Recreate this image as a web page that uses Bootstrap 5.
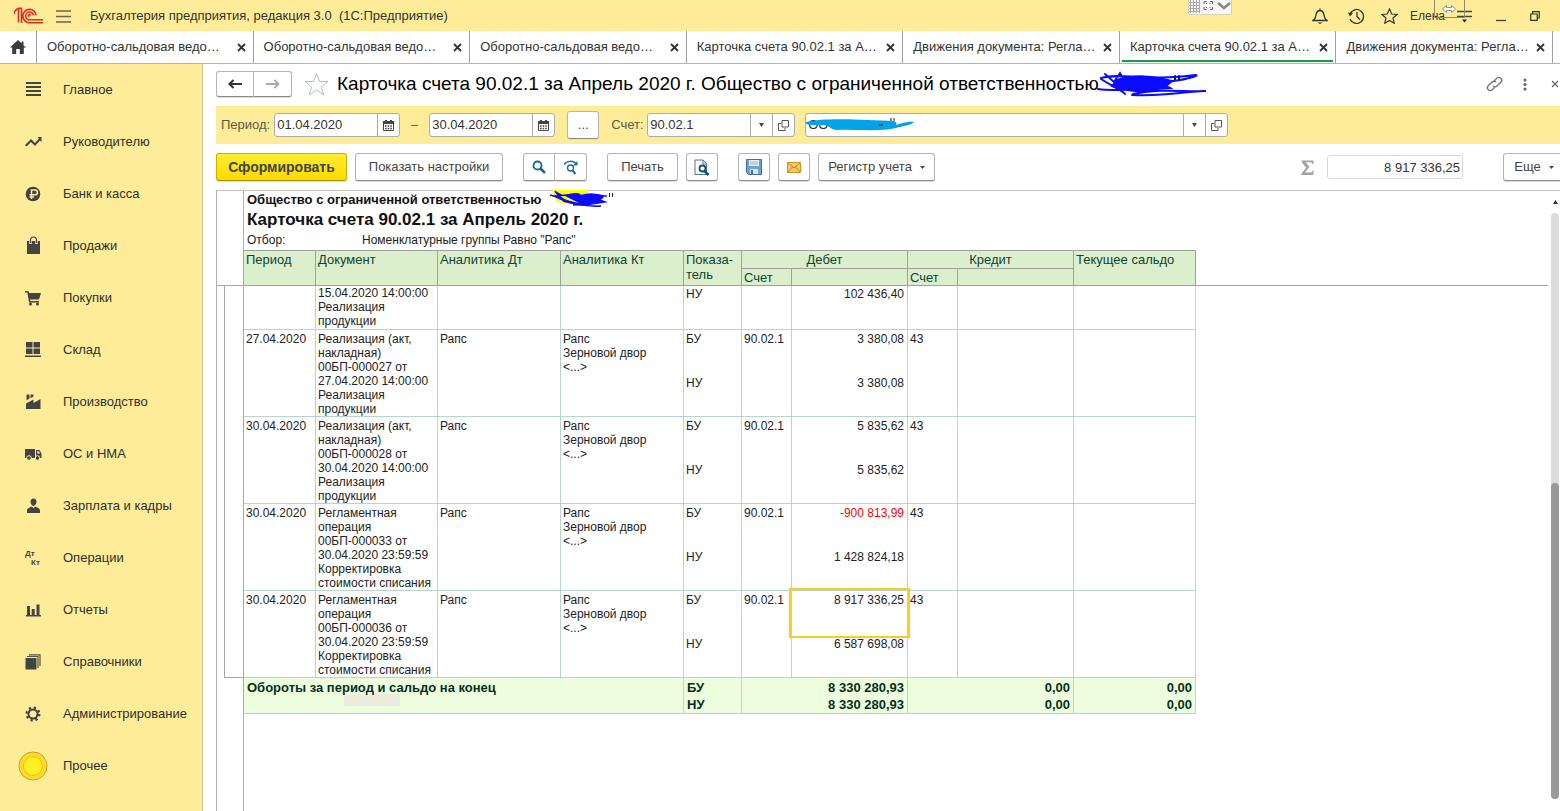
<!DOCTYPE html>
<html lang="ru">
<head>
<meta charset="utf-8">
<meta name="viewport" content="width=device-width, initial-scale=1">
<title>Бухгалтерия предприятия, редакция 3.0</title>
<link rel="stylesheet" href="https://cdn.jsdelivr.net/npm/bootstrap@5.3.0/dist/css/bootstrap.min.css">
<style>
:root{--yel:#feec99;--line:#a0a0a0;--cell:#b5d6c8}
body{font-family:"Liberation Sans",Arial,sans-serif;font-size:13px;line-height:18px;color:#333;background:#fff;overflow-x:hidden}
svg{display:block;flex:none}
button{font-family:inherit;color:inherit}
.bg-yel{background:var(--yel)}
.gap-l8{margin-left:8px}
.gap-l12{margin-left:12px}
.gap-l20{margin-left:20px}
.gap-l24{margin-left:24px}
.gap-l40{margin-left:40px}
.topbar{height:31px;padding:0 20px 0 13px}
.app-name{margin-left:19px}
.plain{background:none;border:0;padding:0;display:flex;align-items:center;justify-content:center}
.ghost{position:absolute;left:24px;top:-8px}
.widget{position:absolute;top:0;right:328px}
.user-name{font-size:12px}
.tabs{height:33px;border-bottom:1px solid #b4b4b4;padding-right:7px}
.home{width:37px;border-right:1px solid var(--line)}
.doc-tab{flex:1 1 0;min-width:0;border-right:1px solid var(--line);padding:0 7px 0 10px;position:relative}
.doc-tab a{color:#333;text-decoration:none;white-space:nowrap}
.doc-tab.current::after{content:"";position:absolute;left:2px;right:2px;bottom:1px;height:2px;background:#169c45}
.side{width:203px;border-right:1px solid #cfc98e;flex:none}
.side a{display:flex;align-items:center;height:52px;padding-left:18px;gap:15px;color:#2f2f2f;text-decoration:none;white-space:nowrap}
.side svg{width:30px;height:30px;fill:#444}
.pane{padding-left:13px;min-width:0}
.b1{background:#fff;border:1px solid #b4b4b4;border-bottom-color:#8c8c8c;border-radius:3px;height:28px;padding:0;color:#444;display:flex;align-items:center;justify-content:center;gap:8px;box-shadow:0 1px 0 #ddd;white-space:nowrap;flex:none}
.group .b1:first-child{border-radius:3px 0 0 3px}
.group .b1:last-child{border-radius:0 3px 3px 0;border-left:0}
.go{background:linear-gradient(#ffee30,#ffd900);border-color:#c9b100;border-bottom-color:#a89400;font-weight:bold;font-size:14px;width:131px}
.nav-b{width:38px;height:26px}
.w32{width:32px}
.w71{width:71px}
.w117{width:117px}
.w148{width:148px}
.titlebar{height:42px;padding-bottom:2px}
.titlebar h1{font-size:19px;line-height:24px;font-weight:400;color:#000;margin:0 0 0 8px;white-space:nowrap}
.filter{height:38px;padding-left:5px;color:#5a5a4a}
.dash{width:29px;text-align:center}
.acct-label{width:36px}
.field{display:flex;height:24px;background:#fff;border:1px solid #a9abb0;border-radius:3px;min-width:0;position:relative}
.field input{border:0;padding:0 2px;min-width:0;flex:1 1 0;background:none;color:#333;outline:0}
.field button{background:none;border:0;border-left:1px solid #a9abb0;width:22px;padding:0;display:flex;align-items:center;justify-content:center;flex:none}
.date{width:126px}
.acct{width:148px}
.org{flex:0 1 423px;margin-left:10px}
.scrib{position:absolute;pointer-events:none}
.scrib-title{left:-2px;top:-2px}
.scrib-org{left:-4px;top:3px}
.scrib-rep{left:8px;top:-2px}
.tools{height:46px}
.sum{width:136px;height:24px;border:1px solid #d8d8d8;border-radius:3px;text-align:right;padding:0 2px;color:#333}
.more{width:61px;margin-right:-4px;border-right:0}
.sheet{border-top:1px solid #c4c4c4;min-height:0}
.sheet-main{border-left:1px solid #b0b0b0;margin-right:3px}
.inset{margin-left:26px;border-left:1px solid #b0b0b0;padding-left:3px;color:#222}
.org-line{font-weight:bold;font-size:13px;line-height:18px;color:#111}
.rep-title{font-weight:bold;font-size:17px;line-height:21px;color:#111;margin:0}
.cond{font-size:12px;line-height:21px;height:20px}
.cond span{width:115px;display:inline-block}
.ledger{table-layout:fixed;width:100%;border-collapse:separate;border-spacing:0;font-size:12px;line-height:14px;color:#222}
.c8{width:8px}.c19{width:19px}.c50{width:50px}.c58{width:58px}.c72{width:72px}.c116{width:116px}.c122{width:122px}.c123{width:123px}
.ledger th,.ledger td{padding:2px 3px 0 2px;vertical-align:top;border-right:1px solid var(--cell);border-bottom:1px solid var(--cell);white-space:nowrap}
.ledger thead th{background:#dcefcd;color:#0d4434;font-weight:400;font-size:13px;line-height:15px;padding:1px 2px 0;border-color:var(--line)}
.ledger thead tr:first-child{height:19px}
.ledger thead tr:first-child th{border-top:1px solid var(--line)}
.ledger .gut,.ledger thead tr:first-child .gut{background:none;border-top:0;border-color:#a6a6a6;padding:0}
.ledger td.g1{border-bottom:0}
.ledger .off,.ledger thead tr:first-child .off{background:none;border-right:0;border-top:0}
.ledger tbody .off,.ledger tfoot .off{border:0}
.ledger tbody tr{height:87px}
.ledger tbody tr.cut{height:44px}
.ledger tr.cut td{padding-top:0}
.ledger tr.cut .pair{padding-top:1px}
.ledger .pair span{display:block;height:44px}
.ledger tr.cut .pair span{height:auto}
.ledger .num{text-align:right;position:relative}
.ledger tfoot td{background:#ecfedd;font-weight:bold;font-size:13px;line-height:17px;color:#062f20;padding:1px 3px 0;position:relative}
.ledger tfoot .gut,.ledger tfoot .off{background:none}
.ledger tfoot .gut{border-bottom:0}
.smudge{position:absolute;left:100px;top:16px;width:56px;height:12px;background:#ebecdc}
.pick{position:absolute;left:-3px;top:-3px;right:-3px;height:50px;border:2px solid #fbcb1f}
.neg{color:#f00}
.bar{width:9px;padding:9px 0 0;margin-right:1px}
.track{background:#dcdcdc;border-radius:4px;width:8px;margin:9px 0 12px;display:flex;flex-direction:column;justify-content:flex-end}
.thumb{background:#999;border-radius:4px;height:54%}
</style>
</head>
<body class="d-flex flex-column min-vh-100">
<header class="topbar bg-yel d-flex align-items-center position-relative">
  <svg width="31" height="18" viewBox="0 0 31 18" fill="none" stroke="#e02a20" stroke-width="1.6"><path d="M1 5 4 2h1.500v13.500M1 6h1.500M8.500 16V1.200H5M30 15.800H16.500a6.700 6.700 0 1 1 6.700-7.500M30 12.800H16.800a3.900 3.900 0 1 1 3.700-4.500M17.500 8.500a1 1 0 1 0-1 1"/></svg>
  <button class="plain gap-l12" aria-label="Меню"><svg width="15" height="14" viewBox="0 0 15 14" stroke="#6b6647" stroke-width="1.500"><path d="M0 2h15M0 7.500h15M0 13h15"/></svg></button>
  <span class="app-name text-nowrap">Бухгалтерия предприятия, редакция 3.0&nbsp; (1С:Предприятие)</span>
  <div class="widget"><svg width="44" height="15" viewBox="0 0 44 15"><path fill="#f7f7f5" stroke="#d6d2bb" d="M.5-.5h43v15H.5z"/><path stroke="#aaa" d="M1 2.500h11M1 5.500h11M1 8.500h11M1 11.500h11M2.500 0v13M5.500 0v13M8.500 0v13M11.500 0v13"/><path fill="none" stroke="#666" d="M16 4V1.500h2.500M22 1.500h2.500V4M24.500 7v2.500H22M18.500 9.500H16V7M18 3l1 1M22.500 3l-1 1M18 8l1-1M22.500 8l-1-1"/><path d="m30 3 6 5 6-5" fill="none" stroke="#888" stroke-width="2.500"/></svg></div>
  <div class="ms-auto d-flex align-items-center">
    <button class="plain" aria-label="Уведомления"><svg width="16" height="16" viewBox="0 0 16 16" fill="none" stroke="#333" stroke-width="1.300"><path d="M1 12.500c3-2 2.500-4 3.300-7C5 3.500 6.500 2.500 8 2.500s3 1 3.700 3c.8 3 .3 5 3.300 7zM8 .500v2"/><path d="M5.500 14.500h5l-2.500 1.500z" fill="#333" stroke="none"/></svg></button>
    <button class="plain gap-l20" aria-label="История"><svg width="17" height="16" viewBox="0 0 17 16" fill="none" stroke="#333" stroke-width="1.300"><path d="M2 6a7 7 0 1 1 0 5M9 4v4.500l3 3"/><path d="M0 4.500 5 5 2 8.500z" fill="#333" stroke="none"/></svg></button>
    <button class="plain ms-3" aria-label="Избранное"><svg width="17" height="16" viewBox="0 0 17 16" fill="none" stroke="#333" stroke-width="1.200"><path d="m8.500 1 2.200 5 5.300.5-4 3.500 1.200 5.200-4.700-2.800-4.700 2.800L5 10 1 6.500 6.300 6z"/></svg></button>
    <div class="gap-l12 position-relative d-flex align-items-center">
      <span class="user-name">Елена</span>
      <svg class="ghost" width="31" height="20" viewBox="0 0 31 20" fill="none" stroke="#8f8a66"><path d="M.5 0v18.500h30V0"/><path fill="#fff" stroke="#8a93a5" d="m8.500 10 4-3.500v2h5v-2l4 3.500-4 3.500v-2h-5v2z"/></svg>
      <button class="plain gap-l12" aria-label="Настройки"><svg width="15" height="14" viewBox="0 0 15 14" stroke="#444" stroke-width="1.300"><path d="M0 2.500h15M0 7.500h15"/><path d="M5 10.500h5l-2.500 3z" fill="#222" stroke="none"/></svg></button>
    </div>
    <button class="plain gap-l24" aria-label="Свернуть"><svg width="10" height="12"><path d="M0 10.500h10" stroke="#444" stroke-width="1.300"/></svg></button>
    <button class="plain gap-l24" aria-label="Развернуть"><svg width="10" height="10" viewBox="0 0 10 10" fill="none" stroke="#333" stroke-width="1.200"><path d="M.7 3h6.500v6.300H.7zM2.700 3V.7h6.500V7H7.200"/></svg></button>
  </div>
</header>

<nav class="tabs d-flex flex-shrink-0">
  <a href="#" class="home d-flex align-items-center justify-content-center" aria-label="Начальная страница"><svg width="16" height="14" viewBox="0 0 16 14" fill="#3c3c3c"><path d="M8 0 0 7.500h2.200V14h4V9h3.600v5h4V7.500H16l-2.500-2.300V1.500h-2v1.800z"/></svg></a>
  <div class="doc-tab d-flex align-items-center justify-content-between"><a href="#">Оборотно-сальдовая ведо…</a><button class="plain close-x" aria-label="Закрыть"></button></div>
  <div class="doc-tab d-flex align-items-center justify-content-between"><a href="#">Оборотно-сальдовая ведо…</a><button class="plain close-x" aria-label="Закрыть"></button></div>
  <div class="doc-tab d-flex align-items-center justify-content-between"><a href="#">Оборотно-сальдовая ведо…</a><button class="plain close-x" aria-label="Закрыть"></button></div>
  <div class="doc-tab d-flex align-items-center justify-content-between"><a href="#">Карточка счета 90.02.1 за А…</a><button class="plain close-x" aria-label="Закрыть"></button></div>
  <div class="doc-tab d-flex align-items-center justify-content-between"><a href="#">Движения документа: Регла…</a><button class="plain close-x" aria-label="Закрыть"></button></div>
  <div class="doc-tab current d-flex align-items-center justify-content-between"><a href="#">Карточка счета 90.02.1 за А…</a><button class="plain close-x" aria-label="Закрыть"></button></div>
  <div class="doc-tab d-flex align-items-center justify-content-between"><a href="#">Движения документа: Регла…</a><button class="plain close-x" aria-label="Закрыть"></button></div>
</nav>

<div class="d-flex flex-grow-1">
  <nav class="side bg-yel">
    <a href="#"><svg viewBox="0 0 30 30"><path d="M8 7h15v2H8zm0 4h15v2H8zm0 4h15v2H8zm0 4h15v2H8z"/></svg>Главное</a>
    <a href="#"><svg viewBox="0 0 30 30"><path d="m7 18 6-6 4 4 4-4.500L19.500 10H23.500v5L22 13.500 17 19l-4-4-4.500 4.500z"/></svg>Руководителю</a>
    <a href="#"><svg viewBox="0 0 30 30"><circle cx="15" cy="15" r="7.300"/><path d="M13.500 20v-9H17a2.300 2.300 0 0 1 0 4.800h-5.500M11.500 18H16" fill="none" stroke="#feec99" stroke-width="1.500"/></svg>Банк и касса</a>
    <a href="#"><svg viewBox="0 0 30 30"><path d="M9 10h13v13H9z"/><path d="M12.500 13v-3a3 3.500 0 0 1 6 0v3" fill="none" stroke="#feec99" stroke-width="2.600"/><path d="M12.500 12v-2.500a3 3.500 0 0 1 6 0V12" fill="none" stroke="#444" stroke-width="1.200"/></svg>Продажи</a>
    <a href="#"><svg viewBox="0 0 30 30"><path d="M7 8h3.500l.6 2H23l-2 6.500H12l.4 1.500H21v1.500H11L9.300 9.500H7z"/><circle cx="12.500" cy="21" r="1.500"/><circle cx="19.500" cy="21" r="1.500"/></svg>Покупки</a>
    <a href="#"><svg viewBox="0 0 30 30"><path d="M8 7h6.500v5.500H8zm7.500 0H22v5.500h-6.500zM8 13.500h6.500V19H8zm7.500 0H22V19h-6.500zM7 20.500h16V22H7z"/></svg>Склад</a>
    <a href="#"><svg viewBox="0 0 30 30"><path d="M8 22v-5.500l7.500-4V16l7-4v10zM8.500 7.500h3v4l-3 1.800zM12.500 7.500h3v2l-3 1.700z"/></svg>Производство</a>
    <a href="#"><svg viewBox="0 0 30 30"><path d="M7 10h10v9H7zM18 11h3.500l2 3.500V19H18zm1.200 1.200v2.300h3l-1.300-2.300z"/><circle cx="11" cy="19" r="2.300" stroke="#feec99"/><circle cx="19.500" cy="19" r="2.300" stroke="#feec99"/></svg>ОС и НМА</a>
    <a href="#"><svg viewBox="0 0 30 30"><path d="M15.500 7.500c2 0 3 1.500 3 3.300S17 15 15.500 15s-3-2.400-3-4.200 1-3.300 3-3.300zM9 22v-2.500c0-2 2.500-3 4.500-4l2 1.500 2-1.500c2 1 4.500 2 4.500 4V22z"/></svg>Зарплата и кадры</a>
    <a href="#"><svg viewBox="0 0 30 30" font-size="8" font-weight="bold" font-family="Liberation Sans, sans-serif"><text x="7" y="13">Дт</text><text x="13" y="22">Кт</text></svg>Операции</a>
    <a href="#"><svg viewBox="0 0 30 30"><path d="M8 20h15v1.500H8zM9 11h3v9H9zM13.700 14h3v6h-3zM18.500 9.500h3V20h-3z"/></svg>Отчеты</a>
    <a href="#"><svg viewBox="0 0 30 30"><path d="M7.500 11h11v11.500h-11z"/><path d="M9 9.500h11V21M11 7.800h11V19" fill="none" stroke="#55513d" stroke-width="1.200"/></svg>Справочники</a>
    <a href="#"><svg viewBox="0 0 30 30"><circle cx="15" cy="15" r="4.500" fill="none" stroke="#444" stroke-width="2"/><circle cx="15" cy="15" r="6.200" fill="none" stroke="#444" stroke-width="2.600" stroke-dasharray="2.200 2.670"/></svg>Администрирование</a>
    <a href="#"><svg viewBox="0 0 30 30"><circle cx="15" cy="15" r="14" fill="#ffd92e" stroke="#caa31c"/><circle cx="15" cy="15" r="9.500" fill="#fff021" stroke="#e8be1c"/></svg>Прочее</a>
  </nav>

  <main class="pane flex-grow-1 d-flex flex-column">
    <div class="titlebar d-flex align-items-center">
      <div class="group d-flex">
        <button class="b1 nav-b" aria-label="Назад"><svg width="14" height="10" viewBox="0 0 14 10"><path d="M14 5H2M5.500 1 1.500 5l4 4" fill="none" stroke="#333" stroke-width="2"/></svg></button>
        <button class="b1 nav-b" aria-label="Вперед"><svg width="14" height="10" viewBox="0 0 14 10"><path d="M0 5h12M8.500 1l4 4-4 4" fill="none" stroke="#aaa" stroke-width="1.800"/></svg></button>
      </div>
      <button class="plain gap-l12" aria-label="В избранное"><svg width="25" height="24" viewBox="0 0 25 24"><path d="m12.500 1.500 3 8h8.500l-6.700 5.300 2.500 8.200-7.300-5-7.300 5 2.500-8.200L1 9.500h8.500z" fill="none" stroke="#b4bcc6"/></svg></button>
      <h1>Карточка счета 90.02.1 за Апрель 2020 г. Общество с ограниченной ответственностью<span class="position-relative">
        <svg class="scrib scrib-title" width="112" height="26" viewBox="0 0 112 26" fill="none" stroke="#0a0aff" stroke-width="2" stroke-linecap="round"><path d="M78 5v4M82 5v4" stroke="#111"/><path d="M4 7c20-6 50 4 94-3 6 0-6 4-22 6l-30 4M1 18c20 3 40-2 60 1M8 3l9 8 6-9 6 10M4 8c12 8 20 10 24 15M36 23c30-6 50-2 73-3-20 0-40 6-74 4"/><path d="M20 9c20-6 35-4 55 1l-6 5 4 2-14 1-14 3-22-3-8-3z" fill="#0a0aff"/></svg></span></h1>
      <div class="ms-auto d-flex align-items-center">
        <button class="plain" aria-label="Ссылка"><svg width="17" height="16" viewBox="0 0 17 16" fill="none" stroke="#777" stroke-width="1.400"><path d="m7 6 3.800-3.800a2.800 2.800 0 0 1 4 4L11 10a2.800 2.800 0 0 1-4 0M10 6a2.800 2.800 0 0 0-4 0L2.200 9.800a2.800 2.800 0 0 0 4 4L9 11"/></svg></button>
        <button class="plain gap-l20" aria-label="Еще"><svg width="4" height="13" fill="#666"><circle cx="2" cy="2" r="1.600"/><circle cx="2" cy="6.500" r="1.600"/><circle cx="2" cy="11" r="1.600"/></svg></button>
        <button class="plain gap-l24" aria-label="Закрыть форму"><svg width="9" height="8"><path d="m1 1 6 6M7 1 1 7" stroke="#666" stroke-width="1.300"/></svg></button>
      </div>
    </div>

    <div class="filter bg-yel d-flex align-items-center">
      <label for="d1" class="me-1">Период:</label>
      <div class="field date"><input id="d1" value="01.04.2020"><button class="cal" aria-label="Календарь"></button></div>
      <label for="d2" class="dash">–</label>
      <div class="field date"><input id="d2" value="30.04.2020"><button class="cal" aria-label="Календарь"></button></div>
      <button class="b1 w32 gap-l12" aria-label="Выбрать период">...</button>
      <label for="acc" class="acct-label gap-l12">Счет:</label>
      <div class="field acct"><input id="acc" value="90.02.1"><button class="drop" aria-label="Выбрать"></button><button class="open" aria-label="Открыть"></button></div>
      <div class="field org"><input id="org" aria-label="Организация" value="ОО"><button class="drop" aria-label="Выбрать"></button><button class="open" aria-label="Открыть"></button>
        <svg class="scrib scrib-org" width="114" height="17" viewBox="0 0 114 17"><path d="M4 5c20-5 60-2 88-1 4 2 2 3 2 4 8-3 16-4 18-3-2 3-12 4-18 6-16 4-40 1-60 2-6-1-6-4-12-5C14 8 2 9 4 5z" fill="#00a2e8"/><path d="M77 8h4M89 1v3M92 1v3" stroke="#222"/></svg></div>
    </div>

    <div class="tools d-flex align-items-center">
      <button class="b1 go">Сформировать</button>
      <button class="b1 w148 gap-l8">Показать настройки</button>
      <div class="group d-flex gap-l20">
        <button class="b1 w32" aria-label="Найти"><svg width="14" height="14" fill="none" stroke="#1565a5"><circle cx="5.500" cy="5.500" r="4" stroke-width="1.800"/><path d="m8.500 8.500 4.500 4.500" stroke-width="2.500"/></svg></button>
        <button class="b1 w32" aria-label="Найти далее"><svg width="16" height="15" viewBox="0 0 16 15" fill="none" stroke="#1c6ea4"><path d="M1 4.500C4 .500 10 .500 13 3.500" stroke-width="1.500"/><path d="M14.500 1v4.500h-4.500z" fill="#1c6ea4" stroke="none"/><circle cx="7.500" cy="8" r="3" stroke-width="1.400"/><path d="m9.500 10.500 3 3.500" stroke-width="2"/></svg></button>
      </div>
      <button class="b1 w71 gap-l20">Печать</button>
      <button class="b1 w32 gap-l8" aria-label="Просмотр"><svg width="16" height="17" viewBox="0 0 16 17" fill="none" stroke="#55738c"><path d="M1 1h8l3.500 3.500V15.500H1z"/><path d="M9 1v4h3.500"/><circle cx="8.500" cy="9.500" r="3" stroke="#0f4f82" stroke-width="1.800" fill="#fff"/><path d="m10.500 12 4 4" stroke="#0f4f82" stroke-width="2.500"/></svg></button>
      <button class="b1 w32 gap-l20" aria-label="Сохранить"><svg width="16" height="16"><path d="M.5.5h15v15h-13l-2-2z" fill="#6fa0d2" stroke="#3f6f9f"/><path d="M3 1h10v6H3z" fill="#e8f1fa"/><path d="M4 3h8M4 5h8" stroke="#8fb0d0"/><path d="M4 10h8v5H4z" fill="#dce5ec"/><path d="M5 11h2v4H5z" fill="#3f6f9f"/></svg></button>
      <button class="b1 w32 gap-l8" aria-label="Отправить"><svg width="14" height="11"><path d="M.5.5h13v10H.5z" fill="#f9c869" stroke="#d48e22"/><path d="m1 1 6 5 6-5M1 10l4.500-5M13 10 8.500 5" fill="none" stroke="#c9821c"/></svg></button>
      <button class="b1 w117 gap-l8">Регистр учета <svg width="5" height="3"><path d="M0 0h5L2.500 3z" fill="#444"/></svg></button>
      <label for="sum" class="ms-auto me-2" aria-label="Сумма"><svg width="18" height="15" viewBox="0 0 18 15"><path d="M.5.500h12v3.500h-1.200c-.3-1.300-.8-1.700-2-1.700H4.800L8.500 7 4 12.500h5.300c1.300 0 2-.6 2.300-2h1.200L12.300 15H.3v-1.300L5 7.800.5 1.800z" fill="#a3a3a3"/></svg></label>
      <input id="sum" class="sum" value="8 917 336,25" readonly>
      <button class="b1 more gap-l40">Еще <svg width="5" height="3"><path d="M0 0h5L2.500 3z" fill="#444"/></svg></button>
    </div>

    <section class="sheet flex-grow-1 d-flex">
      <div class="sheet-main flex-grow-1 d-flex flex-column">
        <div class="inset">
          <div class="org-line">Общество с ограниченной ответственностью<span class="position-relative">
            <svg class="scrib scrib-rep" width="66" height="20" viewBox="0 0 66 20"><path d="M3 0h36v16L8 12z" fill="#ff0"/><path d="M1 5c10 4 30-5 30 1 10-3 16-2 24 0l-4 4 5 2-20 3-14-2-8-2M6 1c5 8 10 10 26 13M24 15c10-1 18 2 28 1M30 5l28 1" fill="#0a0aff" stroke="#0a0aff" stroke-width="1.500"/><path d="M60.500 3v4M63.500 3v4" stroke="#222"/></svg></span></div>
          <h2 class="rep-title">Карточка счета 90.02.1 за Апрель 2020 г.</h2>
          <div class="cond"><span>Отбор:</span>Номенклатурные группы Равно "Рапс"</div>
        </div>
        <table class="ledger">
          <colgroup><col class="c8"><col class="c19"><col class="c72"><col class="c122"><col class="c123"><col class="c123"><col class="c58"><col class="c50"><col class="c116"><col class="c50"><col class="c116"><col class="c122"><col></colgroup>
          <thead>
            <tr><th class="gut" colspan="2" rowspan="2"></th><th rowspan="2">Период</th><th rowspan="2">Документ</th><th rowspan="2">Аналитика Дт</th><th rowspan="2">Аналитика Кт</th><th rowspan="2">Показа-<br>тель</th><th colspan="2" class="text-center">Дебет</th><th colspan="2" class="text-center">Кредит</th><th rowspan="2">Текущее сальдо</th><th rowspan="2" class="off"></th></tr>
            <tr><th>Счет</th><th></th><th>Счет</th><th></th></tr>
          </thead>
          <tbody>
            <tr class="cut"><td class="gut g1"></td><td class="gut g1"></td><td></td><td>15.04.2020 14:00:00<br>Реализация<br>продукции</td><td></td><td></td><td class="pair"><span>НУ</span></td><td></td><td class="num pair"><span>102 436,40</span></td><td></td><td></td><td></td><td class="off"></td></tr>
            <tr><td class="gut g1"></td><td class="gut g1"></td><td>27.04.2020</td><td>Реализация (акт,<br>накладная)<br>00БП-000027 от<br>27.04.2020 14:00:00<br>Реализация<br>продукции</td><td>Рапс</td><td>Рапс<br>Зерновой двор<br>&lt;...&gt;</td><td class="pair"><span>БУ</span>НУ</td><td>90.02.1</td><td class="num pair"><span>3 380,08</span>3 380,08</td><td>43</td><td></td><td></td><td class="off"></td></tr>
            <tr><td class="gut g1"></td><td class="gut g1"></td><td>30.04.2020</td><td>Реализация (акт,<br>накладная)<br>00БП-000028 от<br>30.04.2020 14:00:00<br>Реализация<br>продукции</td><td>Рапс</td><td>Рапс<br>Зерновой двор<br>&lt;...&gt;</td><td class="pair"><span>БУ</span>НУ</td><td>90.02.1</td><td class="num pair"><span>5 835,62</span>5 835,62</td><td>43</td><td></td><td></td><td class="off"></td></tr>
            <tr><td class="gut g1"></td><td class="gut g1"></td><td>30.04.2020</td><td>Регламентная<br>операция<br>00БП-000033 от<br>30.04.2020 23:59:59<br>Корректировка<br>стоимости списания</td><td>Рапс</td><td>Рапс<br>Зерновой двор<br>&lt;...&gt;</td><td class="pair"><span>БУ</span>НУ</td><td>90.02.1</td><td class="num pair"><span class="neg">-900 813,99</span>1 428 824,18</td><td>43</td><td></td><td></td><td class="off"></td></tr>
            <tr><td class="gut g1"></td><td class="gut"></td><td>30.04.2020</td><td>Регламентная<br>операция<br>00БП-000036 от<br>30.04.2020 23:59:59<br>Корректировка<br>стоимости списания</td><td>Рапс</td><td>Рапс<br>Зерновой двор<br>&lt;...&gt;</td><td class="pair"><span>БУ</span>НУ</td><td>90.02.1</td><td class="num pair"><span>8 917 336,25</span>6 587 698,08<i class="pick"></i></td><td>43</td><td></td><td></td><td class="off"></td></tr>
          </tbody>
          <tfoot>
            <tr><td class="gut" colspan="2"></td><td colspan="4"><i class="smudge"></i><span class="position-relative">Обороты за период и сальдо на конец</span></td><td>БУ<br>НУ</td><td colspan="2" class="num">8 330 280,93<br>8 330 280,93</td><td colspan="2" class="num">0,00<br>0,00</td><td class="num">0,00<br>0,00</td><td class="off"></td></tr>
          </tfoot>
        </table>
        <div class="inset flex-grow-1"></div>
      </div>
      <div class="bar d-flex flex-column align-items-center">
        <svg width="5" height="4"><path d="M0 4h5L2.500 0z" fill="#333"/></svg>
        <div class="track flex-grow-1"><div class="thumb"></div></div>
      </div>
    </section>
  </main>
</div>

<script src="https://cdn.jsdelivr.net/npm/bootstrap@5.3.0/dist/js/bootstrap.bundle.min.js"></script>
<script>
// Glyphs shared by repeated buttons
const glyphs = {
  '.close-x': '<svg width="9" height="9"><path d="m1 1 7 7M8 1 1 8" stroke="#333" stroke-width="1.800"/></svg>',
  '.cal': '<svg width="11" height="11" viewBox="0 0 11 11"><path d="M.5 1.500h10v9H.5z" fill="#fff" stroke="#444"/><path d="M0 1h11v3H0zM2 0h2v2H2zM7 0h2v2H7z" fill="#444"/><path d="M2 6h7M2 8.500h7" stroke="#444" stroke-width="1.500" stroke-dasharray="1.600 1"/></svg>',
  '.drop': '<svg width="5" height="4"><path d="M0 0h5L2.500 4z" fill="#444"/></svg>',
  '.open': '<svg width="11" height="11" fill="none" stroke="#555"><path d="M4 .5h6.500V7H4zM3 3.500H.5v7H7V8"/></svg>'
};
for (const [sel, svg] of Object.entries(glyphs))
  document.querySelectorAll(sel).forEach(el => el.innerHTML = svg);
</script>
</body>
</html>
